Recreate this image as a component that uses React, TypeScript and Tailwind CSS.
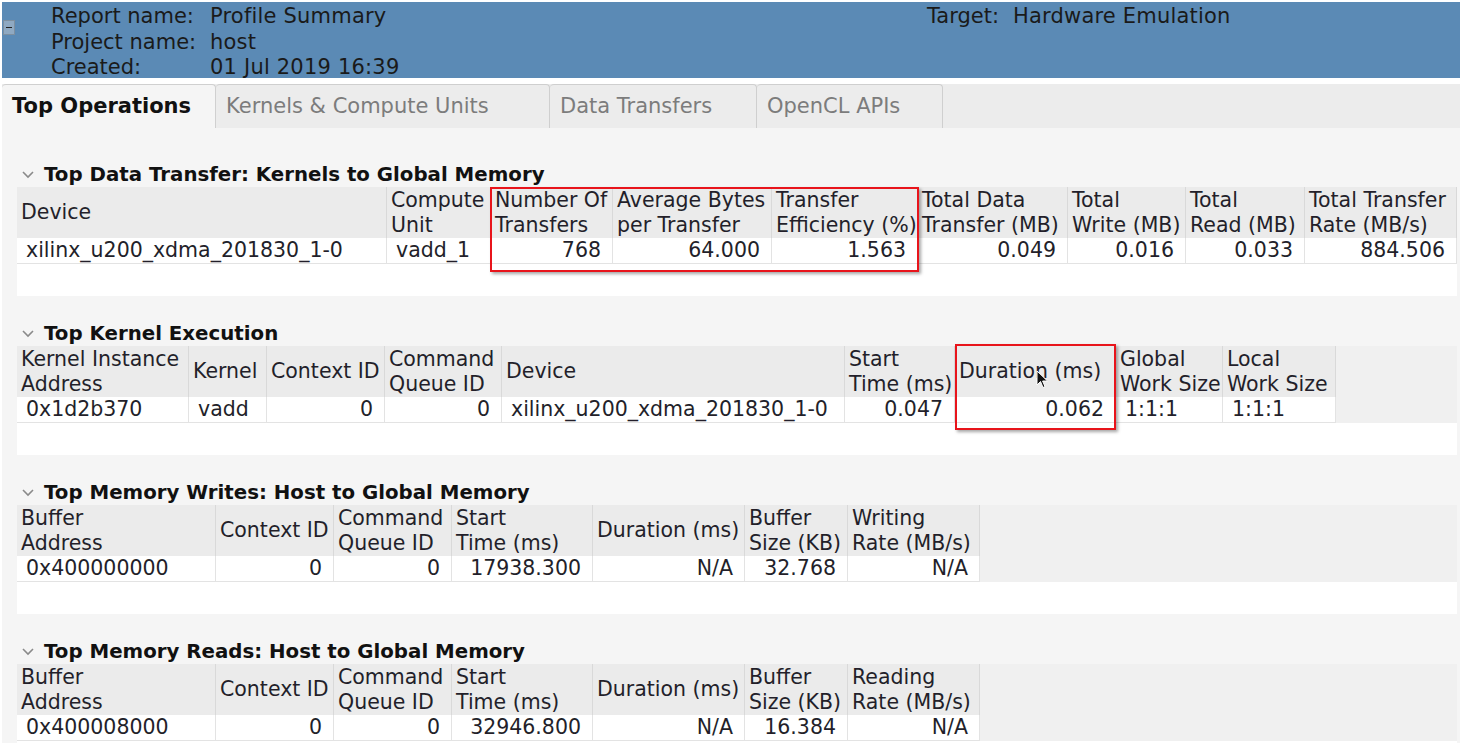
import type { ReactNode } from 'react'

type Col = { label: string[]; w: number; right?: boolean }

type TableProps = {
  cols: Col[]
  row: string[]
  children?: ReactNode
}

const DataTable = ({ cols, row, children }: TableProps) => (
  <div className="relative w-[1440px]">
    <div className="flex h-[51px]">
      {cols.map((c, i) => (
        <div
          key={i}
          style={{ width: c.w }}
          className="flex shrink-0 flex-col justify-center border-r border-[#d9d9d9] bg-[#ebebeb] pl-[4px] leading-[25px] whitespace-nowrap"
        >
          {c.label.map((l) => (
            <span key={l}>{l}</span>
          ))}
        </div>
      ))}
      <div className="flex-1 bg-[#f0f0f0]" />
    </div>
    <div className="flex h-[26px]">
      {cols.map((c, i) => (
        <div
          key={i}
          style={{ width: c.w }}
          className={`flex shrink-0 items-center border-r border-b border-[#e3e3e3] bg-white leading-[25px] whitespace-nowrap ${
            c.right ? 'justify-end pr-[11px]' : 'pl-[9px]'
          }`}
        >
          {row[i]}
        </div>
      ))}
      <div className="flex-1 bg-[#f0f0f0]" />
    </div>
    <div className="h-[32px] bg-white" />
    {children}
  </div>
)

const Section = ({ title, children }: { title: string; children: ReactNode }) => (
  <div>
    <div className="flex h-[24px] items-center">
      <svg width="14" height="10" viewBox="0 0 14 10" className="mr-[9px] ml-[4px]">
        <path d="M2 2 L7 7 L12 2" fill="none" stroke="#8a8a8a" strokeWidth="1.6" />
      </svg>
      <span className="text-[19.8px] font-bold text-[#111]">{title}</span>
    </div>
    {children}
  </div>
)

const RedBox = ({ className }: { className: string }) => (
  <div
    className={`pointer-events-none absolute border-2 border-[#e8141b] shadow-[2px_2px_3px_rgba(0,0,0,0.35)] ${className}`}
  />
)

export default function App() {
  const tabs = ['Kernels & Compute Units', 'Data Transfers', 'OpenCL APIs']
  const tabW = ['w-[334px]', 'w-[207px]', 'w-[186px]']

  return (
    <div className="flex h-[743px] w-[1460px] flex-col overflow-hidden bg-white pt-[2px] pl-[2px] font-['DejaVu_Sans',sans-serif] text-[20.5px] text-[#231f2a]">
      {/* === Шапка отчёта === */}
      <div className="flex h-[76px] shrink-0 bg-[#5b8ab5] text-[21px] leading-[25.5px] text-[#1a1a1a]">
        <div className="w-[49px] pt-[18px] pl-[1px]">
          <div className="flex h-[15px] w-[12px] items-center justify-center border border-[#7d8fa0] bg-[#8fa9c2]">
            <div className="h-[1px] w-[6px] bg-[#222]" />
          </div>
        </div>
        <div className="flex w-[876px] pt-[2px]">
          <div className="w-[159px]">
            <div>Report name:</div>
            <div>Project name:</div>
            <div>Created:</div>
          </div>
          <div className="tracking-[0.2px]">
            <div>Profile Summary</div>
            <div>host</div>
            <div>01 Jul 2019 16:39</div>
          </div>
        </div>
        <div className="flex pt-[2px]">
          <span className="w-[86px]">Target:</span>
          <span className="tracking-[0.2px]">Hardware Emulation</span>
        </div>
      </div>

      {/* === Табы === */}
      <div className="mt-[6px] flex h-[44px] shrink-0 bg-[#ececec] text-[21px]">
        <div className="flex w-[214px] items-center rounded-t-[4px] border-t border-r border-[#d0d0d0] bg-[#f5f5f5] pl-[10px] font-bold text-[#111]">
          Top Operations
        </div>
        {tabs.map((t, i) => (
          <div
            key={t}
            className={`flex ${tabW[i]} items-center rounded-t-[4px] border-t border-r border-[#cfcfcf] pl-[10px] text-[#7c7c7c]`}
          >
            {t}
          </div>
        ))}
      </div>

      {/* === Контент === */}
      <div className="flex flex-1 flex-col gap-[26px] bg-[#f5f5f5] pt-[35px] pl-[15px]">
        <Section title="Top Data Transfer: Kernels to Global Memory">
          <DataTable
            cols={[
              { label: ['Device'], w: 370 },
              { label: ['Compute', 'Unit'], w: 104 },
              { label: ['Number Of', 'Transfers'], w: 122, right: true },
              { label: ['Average Bytes', 'per Transfer'], w: 159, right: true },
              { label: ['Transfer', 'Efficiency (%)'], w: 146, right: true },
              { label: ['Total Data', 'Transfer (MB)'], w: 150, right: true },
              { label: ['Total', 'Write (MB)'], w: 118, right: true },
              { label: ['Total', 'Read (MB)'], w: 119, right: true },
              { label: ['Total Transfer', 'Rate (MB/s)'], w: 152, right: true },
            ]}
            row={['xilinx_u200_xdma_201830_1-0', 'vadd_1', '768', '64.000', '1.563', '0.049', '0.016', '0.033', '884.506']}
          >
            <RedBox className="top-0 left-[473px] h-[85px] w-[429px]" />
          </DataTable>
        </Section>

        <Section title="Top Kernel Execution">
          <DataTable
            cols={[
              { label: ['Kernel Instance', 'Address'], w: 172 },
              { label: ['Kernel'], w: 78 },
              { label: ['Context ID'], w: 118, right: true },
              { label: ['Command', 'Queue ID'], w: 117, right: true },
              { label: ['Device'], w: 343 },
              { label: ['Start', 'Time (ms)'], w: 110, right: true },
              { label: ['Duration (ms)'], w: 161, right: true },
              { label: ['Global', 'Work Size'], w: 107 },
              { label: ['Local', 'Work Size'], w: 113 },
            ]}
            row={['0x1d2b370', 'vadd', '0', '0', 'xilinx_u200_xdma_201830_1-0', '0.047', '0.062', '1:1:1', ' 1:1:1']}
          >
            <RedBox className="-top-[2px] left-[938px] h-[86px] w-[161px]" />
            <svg
              width="14"
              height="20"
              viewBox="0 0 14 20"
              className="pointer-events-none absolute top-[24px] left-[1019px]"
            >
              <path d="M1 1 L1 15 L4.5 11.5 L7 17.5 L9 16.6 L6.6 11 L11.5 11 Z" fill="#111" stroke="#fff" strokeWidth="1" />
            </svg>
          </DataTable>
        </Section>

        <Section title="Top Memory Writes: Host to Global Memory">
          <DataTable
            cols={[
              { label: ['Buffer', 'Address'], w: 199 },
              { label: ['Context ID'], w: 118, right: true },
              { label: ['Command', 'Queue ID'], w: 118, right: true },
              { label: ['Start', 'Time (ms)'], w: 141, right: true },
              { label: ['Duration (ms)'], w: 152, right: true },
              { label: ['Buffer', 'Size (KB)'], w: 103, right: true },
              { label: ['Writing', 'Rate (MB/s)'], w: 132, right: true },
            ]}
            row={['0x400000000', '0', '0', '17938.300', 'N/A', '32.768', 'N/A']}
          />
        </Section>

        <Section title="Top Memory Reads: Host to Global Memory">
          <DataTable
            cols={[
              { label: ['Buffer', 'Address'], w: 199 },
              { label: ['Context ID'], w: 118, right: true },
              { label: ['Command', 'Queue ID'], w: 118, right: true },
              { label: ['Start', 'Time (ms)'], w: 141, right: true },
              { label: ['Duration (ms)'], w: 152, right: true },
              { label: ['Buffer', 'Size (KB)'], w: 103, right: true },
              { label: ['Reading', 'Rate (MB/s)'], w: 132, right: true },
            ]}
            row={['0x400008000', '0', '0', '32946.800', 'N/A', '16.384', 'N/A']}
          />
        </Section>
      </div>
    </div>
  )
}
